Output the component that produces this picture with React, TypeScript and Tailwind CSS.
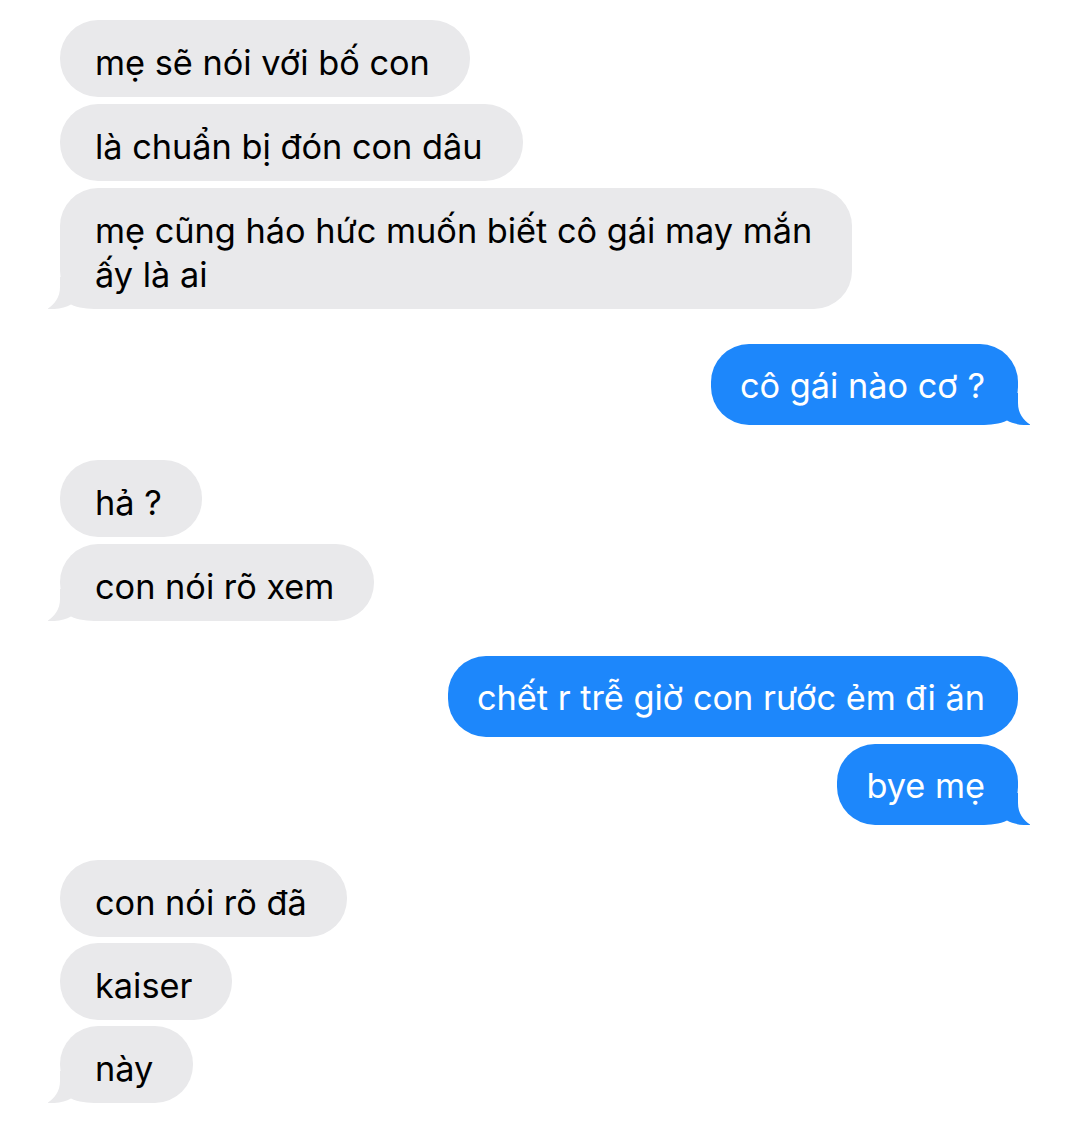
type Msg = { from: "them" | "me"; lines: string[] };

const groups: Msg[][] = [
  [
    { from: "them", lines: ["mẹ sẽ nói với bố con"] },
    { from: "them", lines: ["là chuẩn bị đón con dâu"] },
    { from: "them", lines: ["mẹ cũng háo hức muốn biết cô gái may mắn", "ấy là ai"] },
  ],
  [{ from: "me", lines: ["cô gái nào cơ ?"] }],
  [
    { from: "them", lines: ["hả ?"] },
    { from: "them", lines: ["con nói rõ xem"] },
  ],
  [
    { from: "me", lines: ["chết r trễ giờ con rước ẻm đi ăn"] },
    { from: "me", lines: ["bye mẹ"] },
  ],
  [
    { from: "them", lines: ["con nói rõ đã"] },
    { from: "them", lines: ["kaiser"] },
    { from: "them", lines: ["này"] },
  ],
];

function Tail({ mine }: { mine: boolean }) {
  return (
    <svg
      aria-hidden="true"
      viewBox="0 0 50 32"
      className={
        mine
          ? "absolute -right-[12px] bottom-0 h-[32px] w-[50px] -scale-x-100 text-[#1d87fb]"
          : "absolute -left-[12px] bottom-0 h-[32px] w-[50px] text-[#e9e9eb]"
      }
      fill="currentColor"
    >
      <path d="M12 0L12 10C12 21 6 28 -1 32C9 32.6 17 30.8 23 27.5C30 31 40 32 50 32L50 0Z" />
    </svg>
  );
}

function Bubble({ msg, last }: { msg: Msg; last: boolean }) {
  const mine = msg.from === "me";
  return (
    <div className={mine ? "flex justify-end" : "flex justify-start"}>
      <div
        className={
          mine
            ? "relative rounded-[38px] bg-[#1d87fb] pl-[29px] pr-[33px] pt-[20px] pb-[17px] text-white"
            : "relative rounded-[38px] bg-[#e9e9eb] pl-[35px] pr-[40px] pt-[21px] pb-[12px] text-black"
        }
      >
        {last && <Tail mine={mine} />}
        <p className="relative text-[34.3px] leading-[44px]">
          {msg.lines.map((line, i) => (
            <span key={i} className="block">
              {line}
            </span>
          ))}
        </p>
      </div>
    </div>
  );
}

export default function App() {
  return (
    <main
      className="flex min-h-[1129px] w-[1080px] flex-col gap-[35px] bg-white pl-[60px] pr-[62px] pt-[20px]"
      style={{ fontFamily: 'Inter, "Noto Sans", sans-serif' }}
    >
      {groups.map((group, gi) => (
        <section key={gi} className={gi === 4 ? "flex flex-col gap-[6px]" : "flex flex-col gap-[7px]"}>
          {group.map((msg, mi) => (
            <Bubble key={mi} msg={msg} last={mi === group.length - 1} />
          ))}
        </section>
      ))}
    </main>
  );
}
